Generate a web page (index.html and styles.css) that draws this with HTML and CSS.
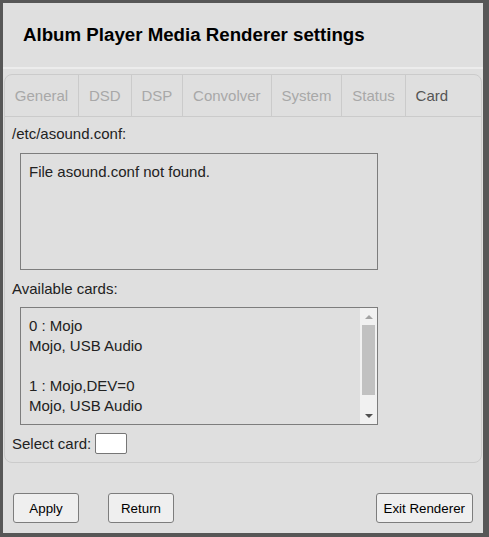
FILE: index.html
```html
<!DOCTYPE html>
<html lang="en">
<head>
    <meta charset="UTF-8">
    <title>Album Player Media Renderer settings</title>
    <link rel="stylesheet" href="styles.css">
</head>
<body>
    <div class="dialog">
        <div class="dialog-title">Album Player Media Renderer settings</div>

        <div class="tabs">
            <ul class="tab-list">
                <li class="tab">General</li>
                <li class="tab">DSD</li>
                <li class="tab">DSP</li>
                <li class="tab">Convolver</li>
                <li class="tab">System</li>
                <li class="tab">Status</li>
                <li class="tab active">Card</li>
            </ul>

            <div class="tab-panel">
                <p class="label">/etc/asound.conf:</p>
                <div class="box">
                    <div class="box-text">File asound.conf not found.</div>
                </div>

                <p class="label label-cards">Available cards:</p>
                <div class="box box-cards">
                    <div class="box-text">
                        0 : Mojo<br>
                        Mojo, USB Audio<br>
                        <br>
                        1 : Mojo,DEV=0<br>
                        Mojo, USB Audio<br>
                        <br>
                    </div>
                    <div class="scrollbar">
                        <div class="sb-btn"><span class="arrow-up"></span></div>
                        <div class="sb-track"><div class="sb-thumb"></div></div>
                        <div class="sb-btn"><span class="arrow-down"></span></div>
                    </div>
                </div>

                <div class="select-row">
                    <span>Select card:</span>
                    <input type="text" class="card-input">
                </div>
            </div>
        </div>

        <div class="buttons">
            <button class="btn">Apply</button>
            <button class="btn">Return</button>
            <button class="btn btn-exit">Exit Renderer</button>
        </div>
    </div>
</body>
</html>
```

FILE: styles.css
```css
body { margin: 3px; background: #575757; font-family: "Liberation Sans", Arial, sans-serif; color: #222; }
.dialog { width: 480px; background: #dfdfdf; padding-bottom: 10px; }

.dialog-title { height: 64px; padding-left: 20px; font-size: 18.7px; font-weight: bold; color: #000; line-height: 64px; border-bottom: 2px solid #ececec; }

/* вкладки */
.tabs { margin: 5px 1px 0 1px; border: 1px solid #cbcbcb; border-radius: 8px; }
.tab-list { display: flex; list-style: none; margin: 0; padding: 0; height: 41px; border-bottom: 1px solid #cbcbcb; }
.tab { padding: 0 10px 0 9.8px; border-right: 1px solid #cbcbcb; font-size: 15px; line-height: 41px; color: #a8a8a8; }
.tab.active { border-right: none; color: #555; }

.tab-panel { padding: 8px 7px 8px 7px; font-size: 15px; }
.label { margin: 0; line-height: 18px; }
.label-cards { margin-top: 10px; }

.box { display: flex; width: 356px; height: 115px; margin: 10px 0 0 8px; border: 1px solid #7d7d7d; overflow: hidden; }
.box-cards { height: 116px; margin-top: 9px; }
.box-text { flex: 1; padding: 8px 8px; line-height: 20px; }

.scrollbar { width: 17px; display: flex; flex-direction: column; background: #f1f1f1; }
.sb-btn { height: 17px; display: flex; align-items: center; justify-content: center; }
.sb-track { flex: 1; padding: 0 2px; }
.sb-thumb { height: 70px; background: #c1c1c1; }
.arrow-up { width: 0; height: 0; border-left: 4px solid transparent; border-right: 4px solid transparent; border-bottom: 4px solid #a3a3a3; }
.arrow-down { width: 0; height: 0; border-left: 4px solid transparent; border-right: 4px solid transparent; border-top: 4px solid #505050; }

.select-row { display: flex; align-items: center; gap: 4px; margin-top: 8px; height: 21px; }
.card-input { width: 30px; height: 19px; padding: 0; margin: 0; border: 1px solid #767676; border-radius: 2px; background: #fff; }

/* кнопки внизу */
.buttons { display: flex; margin-top: 30px; padding: 0 10px; }
.btn { min-width: 66px; height: 30px; padding: 0 7px; margin-right: 29px; background: #efefef; border: 1px solid #7d7d7d; border-radius: 3px; font-family: "Liberation Sans", Arial, sans-serif; font-size: 13.33px; color: #000; }
.btn-exit { margin-left: auto; margin-right: 0; }
```
